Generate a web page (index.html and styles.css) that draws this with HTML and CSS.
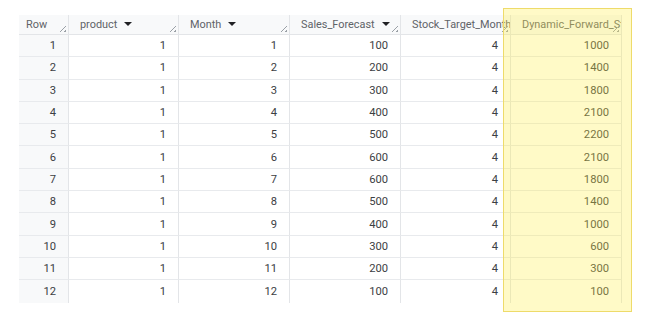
FILE: index.html
```html
<!DOCTYPE html>
<html>
<head>
<meta charset="utf-8">
<link rel="stylesheet" href="styles.css">
</head>
<body>
<div class="wrap">
  <div class="grid">
    <div class="hd rownum-h"><span class="lbl">Row</span><i class="grip"></i></div>
    <div class="hd"><span class="lbl">product</span><span class="tri"></span><i class="grip"></i></div>
    <div class="hd"><span class="lbl">Month</span><span class="tri"></span><i class="grip"></i></div>
    <div class="hd"><span class="lbl">Sales_Forecast</span><span class="tri"></span><i class="grip"></i></div>
    <div class="hd"><span class="lbl">Stock_Target_Month</span><i class="grip"></i></div>
    <div class="hd"><span class="lbl">Dynamic_Forward_Stock</span><i class="grip"></i></div>

    <div class="c rn">1</div><div class="c">1</div><div class="c">1</div><div class="c">100</div><div class="c">4</div><div class="c">1000</div>
    <div class="c rn">2</div><div class="c">1</div><div class="c">2</div><div class="c">200</div><div class="c">4</div><div class="c">1400</div>
    <div class="c rn">3</div><div class="c">1</div><div class="c">3</div><div class="c">300</div><div class="c">4</div><div class="c">1800</div>
    <div class="c rn">4</div><div class="c">1</div><div class="c">4</div><div class="c">400</div><div class="c">4</div><div class="c">2100</div>
    <div class="c rn">5</div><div class="c">1</div><div class="c">5</div><div class="c">500</div><div class="c">4</div><div class="c">2200</div>
    <div class="c rn">6</div><div class="c">1</div><div class="c">6</div><div class="c">600</div><div class="c">4</div><div class="c">2100</div>
    <div class="c rn">7</div><div class="c">1</div><div class="c">7</div><div class="c">600</div><div class="c">4</div><div class="c">1800</div>
    <div class="c rn">8</div><div class="c">1</div><div class="c">8</div><div class="c">500</div><div class="c">4</div><div class="c">1400</div>
    <div class="c rn">9</div><div class="c">1</div><div class="c">9</div><div class="c">400</div><div class="c">4</div><div class="c">1000</div>
    <div class="c rn">10</div><div class="c">1</div><div class="c">10</div><div class="c">300</div><div class="c">4</div><div class="c">600</div>
    <div class="c rn">11</div><div class="c">1</div><div class="c">11</div><div class="c">200</div><div class="c">4</div><div class="c">300</div>
    <div class="c rn last">12</div><div class="c last">1</div><div class="c last">12</div><div class="c last">100</div><div class="c last">4</div><div class="c last">100</div>
  </div>
  <div class="highlight"></div>
</div>
</body>
</html>
```
FILE: styles.css
```css
* { box-sizing: border-box; }
html, body { margin: 0; padding: 0; background: #fff; }
body {
  width: 653px;
  height: 320px;
  overflow: hidden;
  font-family: Roboto, "Liberation Sans", Arial, sans-serif;
}
.wrap {
  position: relative;
  padding: 15px 0 0 19px;
}
.grid {
  display: grid;
  grid-template-columns: 50px 110px 111px 111px 110px 111px;
  grid-template-rows: 20px repeat(12, 22.3px);
  width: 603px;
}
.hd {
  position: relative;
  display: flex;
  align-items: center;
  padding: 0 0 0 11px;
  background: #f8f9fa;
  border-right: 1px solid #e3e5e8;
  border-bottom: 1px solid #e3e5e8;
  color: #5f6368;
  font-size: 10.9px;
  white-space: nowrap;
  overflow: hidden;
}
.rownum-h { padding-left: 7px; }
.lbl { flex: none; }
.tri {
  flex: none;
  width: 0;
  height: 0;
  margin-left: 7px;
  margin-top: -1px;
  border-left: 4px solid transparent;
  border-right: 4px solid transparent;
  border-top: 4.5px solid #202124;
}
.grip {
  position: absolute;
  right: 2px;
  bottom: 2px;
  width: 6px;
  height: 6px;
  background:
    linear-gradient(135deg, transparent 42%, #9aa0a6 42%, #9aa0a6 55%, transparent 55%),
    linear-gradient(135deg, transparent 78%, #9aa0a6 78%, #9aa0a6 92%, transparent 92%);
}
.c {
  display: flex;
  align-items: center;
  justify-content: flex-end;
  padding-right: 12px;
  font-size: 11.2px;
  color: #3c4043;
  border-right: 1px solid #e3e5e8;
  border-bottom: 1px solid #e8eaed;
  white-space: nowrap;
}
.c.rn {
  background: #f8f9fa;
  border-right: 1px solid #e3e5e8;
}
.c.last { border-bottom: none; }
.highlight {
  position: absolute;
  left: 503px;
  top: 8px;
  width: 129px;
  height: 304px;
  background: rgba(255, 240, 70, 0.3);
  border: 1px solid #eedb6a;
}
```
